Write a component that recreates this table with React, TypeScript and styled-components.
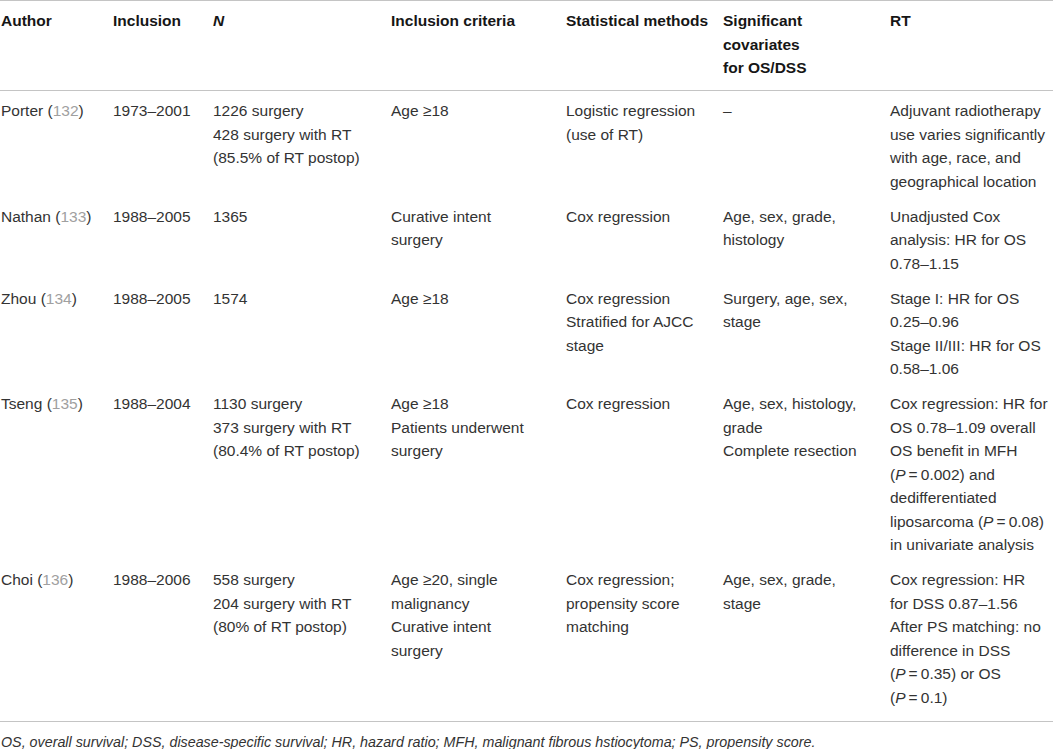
import React from "react";
import styled, { createGlobalStyle } from "styled-components";

const Global = createGlobalStyle`
  html, body { margin: 0; padding: 0; background: #ffffff; }
  body { font-family: "Liberation Sans", Arial, Helvetica, sans-serif; }
`;

const Table = styled.div`
  width: 1053px;
  border-top: 1px solid #c4c4c4;
  color: #333333;
  font-size: 15.5px;
  line-height: 23.5px;
`;

const Row = styled.div<{ $head?: boolean; $first?: boolean; $last?: boolean }>`
  display: grid;
  grid-template-columns: 112px 100px 178px 175px 157px 167px 1fr;
  padding-left: 1px;
  padding-top: ${(p) => (p.$head ? "8px" : p.$first ? "8.5px" : "11.5px")};
  padding-bottom: ${(p) => (p.$head ? "10px" : p.$last ? "12px" : "0")};
  border-bottom: ${(p) => (p.$head || p.$last ? "1px solid #c4c4c4" : "none")};
  font-weight: ${(p) => (p.$head ? 700 : 400)};
  color: ${(p) => (p.$head ? "#161616" : "#333333")};
`;

const Cell = styled.div`
  white-space: nowrap;
`;

const Line = styled.div``;

const Ref = styled.span`
  color: #a0a0a0;
`;

const It = styled.i`
  font-style: italic;
`;

const Footer = styled.div`
  padding: 9px 0 0 1px;
  font-style: italic;
  font-size: 14.3px;
  line-height: 23.5px;
  color: #333333;
  white-space: nowrap;
`;

type Content = React.ReactNode[];

const P = (v: string) => (
  <>
    (<It>P</It>{"\u2009=\u2009"}{v})
  </>
);

const rows: Content[][] = [
  [
    [<>Porter (<Ref>132</Ref>)</>],
    ["1973–2001"],
    ["1226 surgery", "428 surgery with RT", "(85.5% of RT postop)"],
    ["Age \u226518"],
    ["Logistic regression", "(use of RT)"],
    ["–"],
    ["Adjuvant radiotherapy", "use varies significantly", "with age, race, and", "geographical location"],
  ],
  [
    [<>Nathan (<Ref>133</Ref>)</>],
    ["1988–2005"],
    ["1365"],
    ["Curative intent", "surgery"],
    ["Cox regression"],
    ["Age, sex, grade,", "histology"],
    ["Unadjusted Cox", "analysis: HR for OS", "0.78–1.15"],
  ],
  [
    [<>Zhou (<Ref>134</Ref>)</>],
    ["1988–2005"],
    ["1574"],
    ["Age \u226518"],
    ["Cox regression", "Stratified for AJCC", "stage"],
    ["Surgery, age, sex,", "stage"],
    ["Stage I: HR for OS", "0.25–0.96", "Stage II/III: HR for OS", "0.58–1.06"],
  ],
  [
    [<>Tseng (<Ref>135</Ref>)</>],
    ["1988–2004"],
    ["1130 surgery", "373 surgery with RT", "(80.4% of RT postop)"],
    ["Age \u226518", "Patients underwent", "surgery"],
    ["Cox regression"],
    ["Age, sex, histology,", "grade", "Complete resection"],
    [
      "Cox regression: HR for",
      "OS 0.78–1.09 overall",
      "OS benefit in MFH",
      <>{P("0.002")} and</>,
      "dedifferentiated",
      <>liposarcoma {P("0.08")}</>,
      "in univariate analysis",
    ],
  ],
  [
    [<>Choi (<Ref>136</Ref>)</>],
    ["1988–2006"],
    ["558 surgery", "204 surgery with RT", "(80% of RT postop)"],
    ["Age \u226520, single", "malignancy", "Curative intent", "surgery"],
    ["Cox regression;", "propensity score", "matching"],
    ["Age, sex, grade,", "stage"],
    [
      "Cox regression: HR",
      "for DSS 0.87–1.56",
      "After PS matching: no",
      "difference in DSS",
      <>{P("0.35")} or OS</>,
      <>{P("0.1")}</>,
    ],
  ],
];

const headers: Content[] = [
  ["Author"],
  ["Inclusion"],
  [<It>N</It>],
  ["Inclusion criteria"],
  ["Statistical methods"],
  ["Significant", "covariates", "for OS/DSS"],
  ["RT"],
];

const renderCells = (cells: Content[]) =>
  cells.map((lines, i) => (
    <Cell key={i}>
      {lines.map((l, j) => (
        <Line key={j}>{l}</Line>
      ))}
    </Cell>
  ));

export default function App() {
  return (
    <>
      <Global />
      <Table>
        <Row $head>{renderCells(headers)}</Row>
        {rows.map((r, i) => (
          <Row key={i} $first={i === 0} $last={i === rows.length - 1}>
            {renderCells(r)}
          </Row>
        ))}
        <Footer>
          OS, overall survival; DSS, disease-specific survival; HR, hazard ratio; MFH, malignant fibrous hstiocytoma; PS, propensity score.
        </Footer>
      </Table>
    </>
  );
}
